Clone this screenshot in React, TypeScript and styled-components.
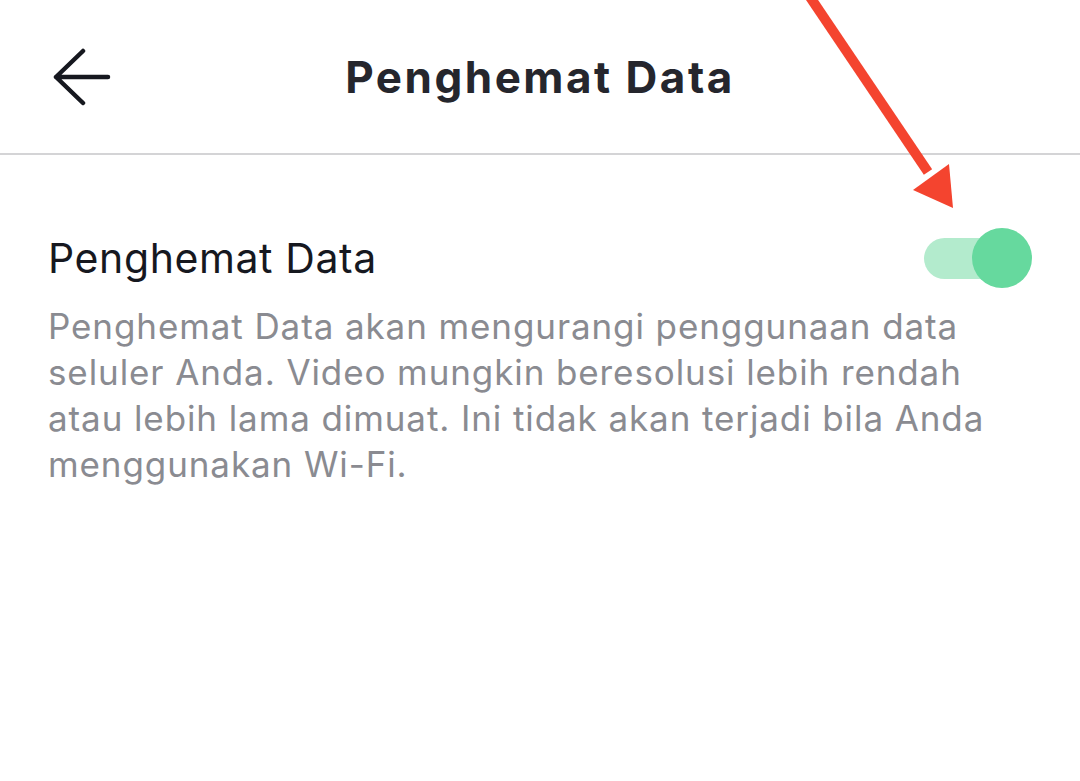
import styled, { createGlobalStyle } from "styled-components";

const GlobalStyle = createGlobalStyle`
    html, body {
        margin: 0;
        padding: 0;
        background: #ffffff;
        font-family: Inter, "Liberation Sans", sans-serif;
    }
`

const Page = styled.div`
    position: relative;
    width: 1080px;
    height: 781px;
    overflow: hidden;
    background: #ffffff;
`

const Header = styled.header`
    display: grid;
    grid-template-columns: 120px 1fr 120px;
    align-items: center;
    height: 153px;
    border-bottom: 2px solid #d4d4d6;
`

const BackButton = styled.button`
    display: flex;
    align-items: center;
    justify-content: flex-start;
    padding: 0 0 0 53px;
    border: none;
    background: none;
    cursor: pointer;
`

const Title = styled.h1`
    margin: 0;
    text-align: center;
    font-size: 44px;
    font-weight: 700;
    letter-spacing: 2.5px;
    color: #25262d;
`

const Content = styled.section`
    padding: 72px 48px 0 48px;
`

const SettingRow = styled.div`
    display: flex;
    align-items: center;
    justify-content: space-between;
    height: 62px;
`

const SettingLabel = styled.span`
    font-size: 41px;
    font-weight: 400;
    letter-spacing: 0.6px;
    color: #16181f;
`

const Description = styled.p`
    margin: 14px 0 0 0;
    font-size: 35px;
    line-height: 46px;
    letter-spacing: 0.9px;
    color: #8a8b91;
    width: 960px;
`

const Toggle = styled.div<{ $on: boolean }>`
    position: relative;
    width: 108px;
    height: 60px;
    display: flex;
    align-items: center;
`

const Track = styled.div<{ $on: boolean }>`
    width: 78px;
    height: 41px;
    border-radius: 21px;
    background: ${p => (p.$on ? "#b3ebcd" : "#e1e1e3")};
`

const Knob = styled.div<{ $on: boolean }>`
    position: absolute;
    top: 0;
    left: ${p => (p.$on ? "48px" : "0")};
    width: 60px;
    height: 60px;
    border-radius: 50%;
    background: ${p => (p.$on ? "#66d99e" : "#ffffff")};
`

const Annotation = styled.svg`
    position: absolute;
    top: 0;
    left: 0;
    pointer-events: none;
`

function BackArrow() {
    return (
        <svg width="58" height="58" viewBox="0 0 58 58" fill="none">
            <path d="M30 3 L3 29 L30 55 M3 29 H55" stroke="#16181f" strokeWidth="4.5" strokeLinecap="round" strokeLinejoin="round" />
        </svg>
    )
}

function App() {
    const dataSaver = true

    return (
        <Page>
            <GlobalStyle />
            <Header>
                <BackButton aria-label="Kembali">
                    <BackArrow />
                </BackButton>
                <Title>Penghemat Data</Title>
                <div />
            </Header>

            <Content>
                <SettingRow>
                    <SettingLabel>Penghemat Data</SettingLabel>
                    <Toggle $on={dataSaver}>
                        <Track $on={dataSaver} />
                        <Knob $on={dataSaver} />
                    </Toggle>
                </SettingRow>
                <Description>
                    Penghemat Data akan mengurangi penggunaan data seluler Anda. Video mungkin beresolusi lebih rendah atau lebih lama dimuat. Ini tidak akan terjadi bila Anda menggunakan Wi-Fi.
                </Description>
            </Content>

            <Annotation width="1080" height="781" viewBox="0 0 1080 781">
                <line x1="808" y1="-6" x2="928" y2="172" stroke="#f4442f" strokeWidth="10" />
                <polygon points="913,190 949,164 953,208" fill="#f4442f" />
            </Annotation>
        </Page>
    )
}

export default App
